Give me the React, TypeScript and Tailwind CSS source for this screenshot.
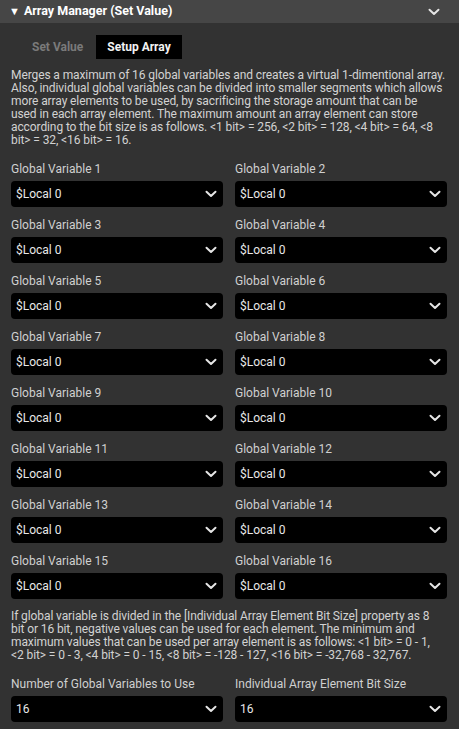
import React from "react";

const Chevron = () => (
  <svg width="12" height="8" viewBox="0 0 12 8" fill="none">
    <path d="M1.5 1.8 L6 6 L10.5 1.8" stroke="#e5e5e5" strokeWidth="2" strokeLinecap="round" strokeLinejoin="round" />
  </svg>
);

const Select = ({ value }: { value: string }) => (
  <div className="flex h-[26px] items-center justify-between rounded-[4px] bg-black pl-[5px] pr-[6px] text-[12px] text-[#e8e8e8]">
    <span>{value}</span>
    <Chevron />
  </div>
);

const Field = ({ label, value }: { label: string; value: string }) => (
  <div className="flex flex-col">
    <div className="h-[16px] text-[12px] leading-[16px] text-[#d0d0d0]">{label}</div>
    <div className="mt-[4px]">
      <Select value={value} />
    </div>
  </div>
);

const Lines = ({ lines, className }: { lines: string[]; className: string }) => (
  <div className={className}>
    {lines.map((l, i) => (
      <span key={i} className="block whitespace-nowrap">
        {l}
      </span>
    ))}
  </div>
);

const desc1 = [
  "Merges a maximum of 16 global variables and creates a virtual 1-dimentional array.",
  "Also, individual global variables can be divided into smaller segments which allows",
  "more array elements to be used, by sacrificing the storage amount that can be",
  "used in each array element. The maximum amount an array element can store",
  "according to the bit size is as follows. <1 bit> = 256, <2 bit> = 128, <4 bit> = 64, <8",
  "bit> = 32, <16 bit> = 16.",
];

const desc2 = [
  "If global variable is divided in the [Individual Array Element Bit Size] property as 8",
  "bit or 16 bit, negative values can be used for each element. The minimum and",
  "maximum values that can be used per array element is as follows: <1 bit> = 0 - 1,",
  "<2 bit> = 0 - 3, <4 bit> = 0 - 15, <8 bit> = -128 - 127, <16 bit> = -32,768 - 32,767.",
];

export default function App() {
  const vars = Array.from({ length: 16 }, (_, i) => i + 1);
  return (
    <div
      className="h-[729px] w-[459px] overflow-hidden bg-[#323232] text-[#d4d4d4]"
      style={{ fontFamily: "Roboto, 'Liberation Sans', sans-serif" }}
    >
      <div className="flex h-[23px] items-center justify-between bg-[#464646] pl-[9px] pr-[19px]">
        <div className="flex items-center text-[12.5px] font-bold text-white">
          <span className="mr-[4px] text-[11px] leading-none">▼</span>
          <span>Array Manager (Set Value)</span>
        </div>
        <Chevron />
      </div>
      <div className="pl-[11px] pr-[12px]">
        <div className="mt-[12px] flex h-[24px] items-stretch pl-[21px] text-[12px] font-bold">
          <div className="flex items-center pr-[13px] text-[#7a7a7a]">Set Value</div>
          <div className="flex items-center bg-black px-[11px] text-[#f2f2f2]">Setup Array</div>
        </div>
        <Lines
          lines={desc1}
          className="mt-[10px] text-[12px] leading-[13px] tracking-[-0.1px] text-[#d2d2d2]"
        />
        <div className="mt-[14px] grid grid-cols-2 gap-x-[12px] gap-y-[10px]">
          {vars.map((n) => (
            <Field key={n} label={`Global Variable ${n}`} value="$Local 0" />
          ))}
        </div>
        <Lines
          lines={desc2}
          className="mt-[11px] text-[12px] leading-[13px] tracking-[-0.1px] text-[#d2d2d2]"
        />
        <div className="mt-[14px] grid grid-cols-2 gap-x-[12px]">
          <Field label="Number of Global Variables to Use" value="16" />
          <Field label="Individual Array Element Bit Size" value="16" />
        </div>
      </div>
    </div>
  );
}
